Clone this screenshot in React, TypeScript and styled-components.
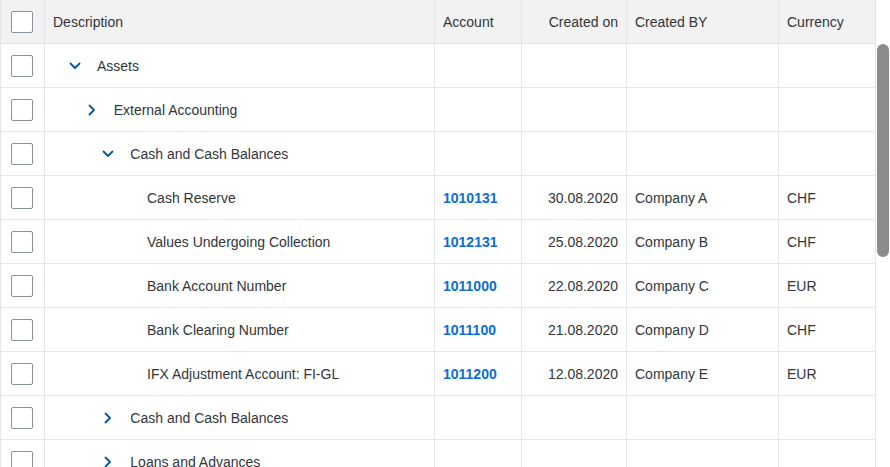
import React from "react";
import styled, { createGlobalStyle } from "styled-components";

const GlobalStyle = createGlobalStyle`
  html, body { margin: 0; padding: 0; background: #ffffff; }
  body { font-family: "Liberation Sans", Arial, sans-serif; color: #32363a; }
`;

const COLS = "45px 390px 87px 105px 152px 97px";

const Frame = styled.div`
  display: flex;
  width: 890px;
  height: 467px;
  overflow: hidden;
  background: #ffffff;
`;

const Table = styled.div`
  display: flex;
  flex-direction: column;
  width: 876px;
  flex: none;
  box-sizing: border-box;
`;

const Row = styled.div<{ $header?: boolean }>`
  display: grid;
  grid-template-columns: ${COLS};
  height: 44px;
  flex: none;
  box-sizing: border-box;
  border-bottom: 1px solid #e5e5e5;
  background: ${(p) => (p.$header ? "#f2f2f2" : "#ffffff")};
`;

const Cell = styled.div<{ $align?: "left" | "right" }>`
  display: flex;
  align-items: center;
  justify-content: ${(p) => (p.$align === "right" ? "flex-end" : "flex-start")};
  padding: 0 8px;
  border-right: 1px solid #e5e5e5;
  font-size: 14px;
  color: #32363a;
  white-space: nowrap;
  overflow: hidden;
  box-sizing: border-box;
`;

const SelectCell = styled(Cell)`
  justify-content: center;
  padding: 0 1px 0 0;
  box-shadow: inset 1px 0 0 #e5e5e5;
`;

const TreeCell = styled(Cell)<{ $level: number }>`
  padding-left: ${(p) => 8 + p.$level * 16.67}px;
`;

const Box = styled.span`
  width: 22px;
  height: 22px;
  box-sizing: border-box;
  border: 1px solid #89919a;
  border-radius: 2px;
  background: #ffffff;
`;

const Toggle = styled.span`
  display: flex;
  align-items: center;
  justify-content: center;
  width: 44px;
  flex: none;
  color: #0854a0;
`;

const Link = styled.span`
  color: #0a6ed1;
  font-weight: bold;
`;

const ScrollColumn = styled.div`
  display: flex;
  flex-direction: column;
  width: 14px;
  flex: none;
  padding-top: 44px;
  box-sizing: border-box;
  align-items: center;
`;

const Thumb = styled.div`
  width: 12px;
  height: 213px;
  border-radius: 6px;
  background: #8c8c8c;
`;

type Node = {
  label: string;
  level: number;
  state?: "open" | "closed";
  account?: string;
  date?: string;
  by?: string;
  cur?: string;
};

const rows: Node[] = [
  { label: "Assets", level: 0, state: "open" },
  { label: "External Accounting", level: 1, state: "closed" },
  { label: "Cash and Cash Balances", level: 2, state: "open" },
  { label: "Cash Reserve", level: 3, account: "1010131", date: "30.08.2020", by: "Company A", cur: "CHF" },
  { label: "Values Undergoing Collection", level: 3, account: "1012131", date: "25.08.2020", by: "Company B", cur: "CHF" },
  { label: "Bank Account Number", level: 3, account: "1011000", date: "22.08.2020", by: "Company C", cur: "EUR" },
  { label: "Bank Clearing Number", level: 3, account: "1011100", date: "21.08.2020", by: "Company D", cur: "CHF" },
  { label: "IFX Adjustment Account: FI-GL", level: 3, account: "1011200", date: "12.08.2020", by: "Company E", cur: "EUR" },
  { label: "Cash and Cash Balances", level: 2, state: "closed" },
  { label: "Loans and Advances", level: 2, state: "closed" },
];

const Chevron = ({ open }: { open: boolean }) => (
  <svg width="12" height="12" viewBox="0 0 12 12" fill="none">
    {open ? (
      <polyline points="1.5,3.5 6,8 10.5,3.5" stroke="currentColor" strokeWidth="1.8" strokeLinecap="round" strokeLinejoin="round" />
    ) : (
      <polyline points="3.5,1.5 8,6 3.5,10.5" stroke="currentColor" strokeWidth="1.8" strokeLinecap="round" strokeLinejoin="round" />
    )}
  </svg>
);

export default function App() {
  return (
    <>
      <GlobalStyle />
      <Frame>
        <Table>
          <Row $header>
            <SelectCell><Box /></SelectCell>
            <Cell>Description</Cell>
            <Cell>Account</Cell>
            <Cell $align="right">Created on</Cell>
            <Cell>Created BY</Cell>
            <Cell>Currency</Cell>
          </Row>
          {rows.map((r, i) => (
            <Row key={i}>
              <SelectCell><Box /></SelectCell>
              <TreeCell $level={r.level}>
                <Toggle>{r.state && <Chevron open={r.state === "open"} />}</Toggle>
                {r.label}
              </TreeCell>
              <Cell>{r.account && <Link>{r.account}</Link>}</Cell>
              <Cell $align="right">{r.date}</Cell>
              <Cell>{r.by}</Cell>
              <Cell>{r.cur}</Cell>
            </Row>
          ))}
        </Table>
        <ScrollColumn>
          <Thumb />
        </ScrollColumn>
      </Frame>
    </>
  );
}
